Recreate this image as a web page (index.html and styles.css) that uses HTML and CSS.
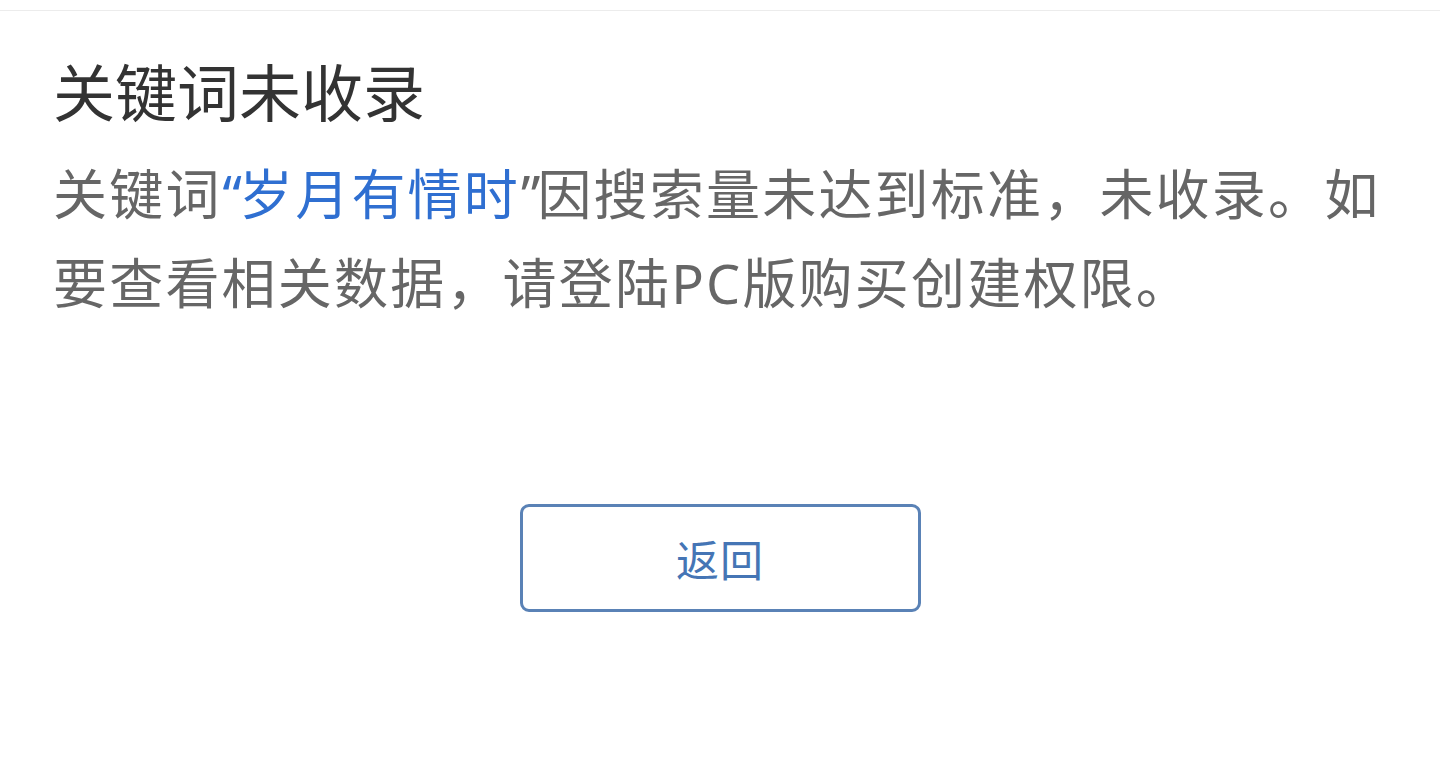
FILE: index.html
```html
<!DOCTYPE html>
<html lang="zh-CN">
<head>
<meta charset="utf-8">
<title>关键词未收录</title>
<link rel="stylesheet" href="styles.css">
</head>
<body>
<div class="page">
  <div class="topbar"></div>
  <main class="content">
    <h1 class="title">关键词未收录</h1>
    <p class="desc">关键词<span class="kw"><span class="q">“</span>岁月有情时</span><span class="q">”</span>因搜索量未达到标准，未收录。如要查看相关数据，请登陆PC版购买创建权限。</p>
    <div class="actions">
      <button class="back-btn" type="button">返回</button>
    </div>
  </main>
</div>
</body>
</html>
```
FILE: styles.css
```css
html, body {
  margin: 0;
  padding: 0;
  background: #ffffff;
}
body {
  font-family: "Noto Sans", "Noto Sans CJK SC", sans-serif;
  width: 1440px;
  height: 782px;
  overflow: hidden;
}
.page {
  display: flex;
  flex-direction: column;
}
.topbar {
  height: 10px;
  border-bottom: 1px solid #ececec;
}
.content {
  display: flex;
  flex-direction: column;
  padding: 36px 40px 0 53px;
}
.title {
  margin: 0;
  font-family: "Noto Sans CJK SC", sans-serif;
  font-weight: 400;
  font-size: 62px;
  line-height: 87px;
  color: #333333;
}
.desc {
  margin: 16px 0 0 0;
  font-size: 54px;
  line-height: 89px;
  letter-spacing: 2.2px;
  color: #666666;
}
.kw {
  color: #2f6fd1;
}
.q {
  letter-spacing: -3px;
  padding-left: 1px;
}
.actions {
  display: flex;
  justify-content: center;
  margin-top: 176px;
  margin-left: -53px;
  margin-right: -40px;
}
.back-btn {
  width: 401px;
  height: 108px;
  box-sizing: border-box;
  border: 3px solid #5a82b6;
  border-radius: 9px;
  background: #ffffff;
  color: #4575b5;
  font-family: "Noto Sans CJK SC", sans-serif;
  font-size: 43px;
  padding: 0;
  letter-spacing: 1px;
}
```
